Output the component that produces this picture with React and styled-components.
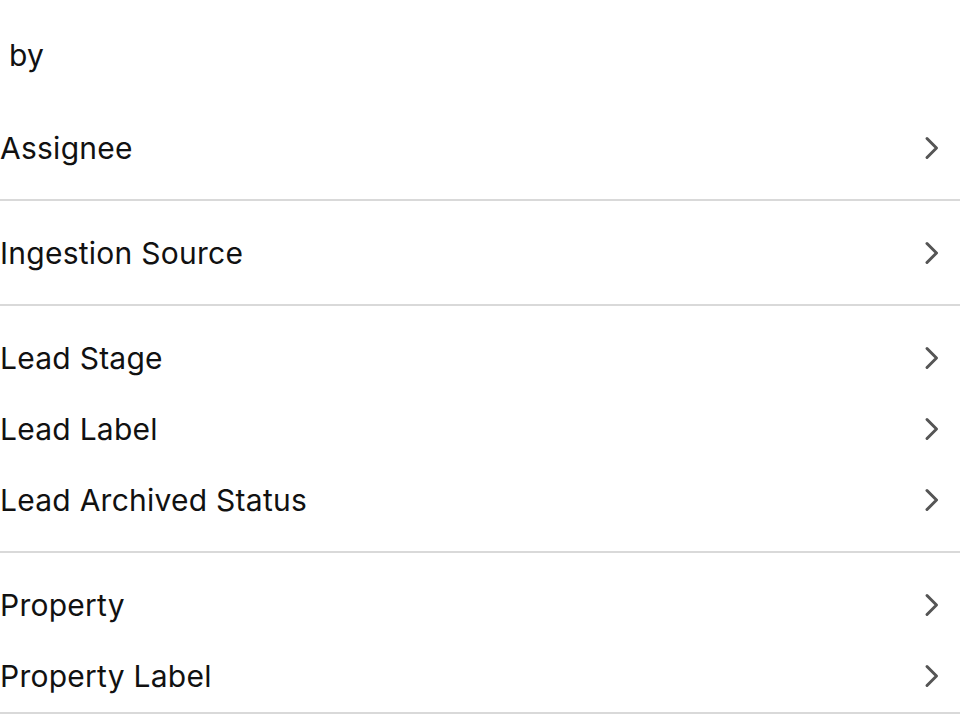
import React from 'react';
import styled, { createGlobalStyle } from 'styled-components';

const GlobalStyle = createGlobalStyle`
  html, body {
    margin: 0;
    padding: 0;
    background: #ffffff;
  }
  body {
    font-family: Inter, "Noto Sans", sans-serif;
    color: #111111;
    overflow: hidden;
  }
`;

const groups = [
    ['Assignee'],
    ['Ingestion Source'],
    ['Lead Stage', 'Lead Label', 'Lead Archived Status'],
    ['Property', 'Property Label'],
];

const Sheet = styled.div`
  width: 960px;
  height: 720px;
  overflow: hidden;
`;

const Title = styled.div`
  height: 112px;
  padding: 36px 0 0 9px;
  box-sizing: border-box;
  font-size: 30px;
  line-height: 38px;
  letter-spacing: 0.25px;
`;

const Group = styled.div`
  padding-top: ${({ $first }) => ($first ? '0' : '16px')};
  padding-bottom: ${({ $last }) => ($last ? '1px' : '16px')};
  border-bottom: 2px solid #d9d9d9;
`;

const Row = styled.div`
  display: flex;
  align-items: center;
  justify-content: space-between;
  height: 71px;
  padding-right: 20px;
`;

const Label = styled.span`
  font-size: 30px;
  letter-spacing: 0.25px;
`;

const Chevron = () => (
    <svg width="16" height="24" viewBox="0 0 16 24" fill="none">
        <path d="M3 2.5 L12.5 12 L3 21.5" stroke="#555555" strokeWidth="3" strokeLinecap="round" strokeLinejoin="round" />
    </svg>
);

const App = () => {
    return (
        <Sheet>
            <GlobalStyle />
            <Title>by</Title>
            {groups.map((items, gi) => (
                <Group key={gi} $first={gi === 0} $last={gi === groups.length - 1}>
                    {items.map(item => (
                        <Row key={item}>
                            <Label>{item}</Label>
                            <Chevron />
                        </Row>
                    ))}
                </Group>
            ))}
        </Sheet>
    );
};

export default App;
